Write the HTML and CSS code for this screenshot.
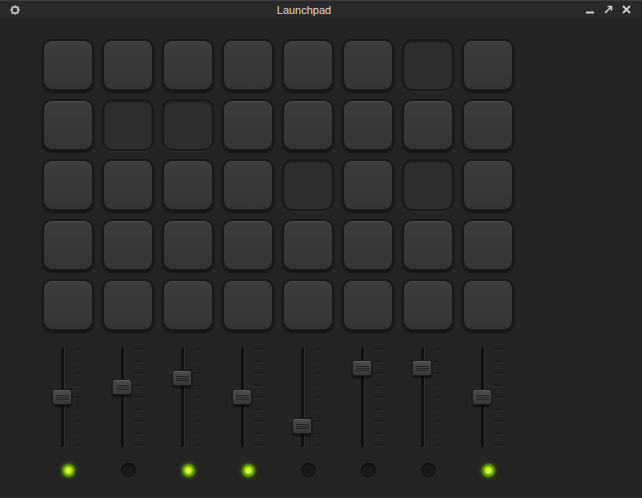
FILE: index.html
```html
<!DOCTYPE html>
<html lang="en">
  <head>
    <meta charset="UTF-8" />
    <title>Launchpad</title>
    <link rel="stylesheet" href="styles.css">
  </head>
  <body>
    <div class="window">
      <header class="titlebar">
        <svg class="gear" width="10" height="10" viewBox="0 0 10 10">
          <circle cx="5" cy="5" r="3.2" fill="none" stroke="#bdbdbd" stroke-width="1.8" />
          <path d="M5 0.2v2M5 7.8v2M0.2 5h2M7.8 5h2M1.6 1.6l1.4 1.4M7 7l1.4 1.4M1.6 8.4L3 7M7 3l1.4-1.4" stroke="#bdbdbd" stroke-width="1.4" />
        </svg>
        <span class="title">Launchpad</span>
        <div class="controls">
          <svg width="9" height="9" viewBox="0 0 9 9"><path d="M0 7.5h8" stroke="#cfcfcf" stroke-width="2" /></svg>
          <svg width="9" height="9" viewBox="0 0 9 9"><path d="M1 8L7 2M3.5 1.5h4v4" fill="none" stroke="#cfcfcf" stroke-width="1.6" /></svg>
          <svg width="9" height="9" viewBox="0 0 9 9"><path d="M1 1l7 7M8 1l-7 7" stroke="#cfcfcf" stroke-width="1.8" /></svg>
        </div>
      </header>

      <main class="panel">
        <div class="pads">
          <div class="pad"></div><div class="pad"></div><div class="pad"></div><div class="pad"></div>
          <div class="pad"></div><div class="pad"></div><div class="pad pressed"></div><div class="pad"></div>

          <div class="pad"></div><div class="pad pressed"></div><div class="pad pressed"></div><div class="pad"></div>
          <div class="pad"></div><div class="pad"></div><div class="pad"></div><div class="pad"></div>

          <div class="pad"></div><div class="pad"></div><div class="pad"></div><div class="pad"></div>
          <div class="pad pressed"></div><div class="pad"></div><div class="pad pressed"></div><div class="pad"></div>

          <div class="pad"></div><div class="pad"></div><div class="pad"></div><div class="pad"></div>
          <div class="pad"></div><div class="pad"></div><div class="pad"></div><div class="pad"></div>

          <div class="pad"></div><div class="pad"></div><div class="pad"></div><div class="pad"></div>
          <div class="pad"></div><div class="pad"></div><div class="pad"></div><div class="pad"></div>
        </div>

        <div class="mixer">
          <div class="strip">
            <div class="fader"><div class="track"></div><div class="ticks"><i></i><i></i><i></i><i></i><i></i><i></i><i></i><i></i><i></i></div><div class="knob" style="top: 42px"></div></div>
            <div class="led on"></div>
          </div>
          <div class="strip">
            <div class="fader"><div class="track"></div><div class="ticks"><i></i><i></i><i></i><i></i><i></i><i></i><i></i><i></i><i></i></div><div class="knob" style="top: 32px"></div></div>
            <div class="led"></div>
          </div>
          <div class="strip">
            <div class="fader"><div class="track"></div><div class="ticks"><i></i><i></i><i></i><i></i><i></i><i></i><i></i><i></i><i></i></div><div class="knob" style="top: 23px"></div></div>
            <div class="led on"></div>
          </div>
          <div class="strip">
            <div class="fader"><div class="track"></div><div class="ticks"><i></i><i></i><i></i><i></i><i></i><i></i><i></i><i></i><i></i></div><div class="knob" style="top: 42px"></div></div>
            <div class="led on"></div>
          </div>
          <div class="strip">
            <div class="fader"><div class="track"></div><div class="ticks"><i></i><i></i><i></i><i></i><i></i><i></i><i></i><i></i><i></i></div><div class="knob" style="top: 71px"></div></div>
            <div class="led"></div>
          </div>
          <div class="strip">
            <div class="fader"><div class="track"></div><div class="ticks"><i></i><i></i><i></i><i></i><i></i><i></i><i></i><i></i><i></i></div><div class="knob" style="top: 13px"></div></div>
            <div class="led"></div>
          </div>
          <div class="strip">
            <div class="fader"><div class="track"></div><div class="ticks"><i></i><i></i><i></i><i></i><i></i><i></i><i></i><i></i><i></i></div><div class="knob" style="top: 13px"></div></div>
            <div class="led"></div>
          </div>
          <div class="strip">
            <div class="fader"><div class="track"></div><div class="ticks"><i></i><i></i><i></i><i></i><i></i><i></i><i></i><i></i><i></i></div><div class="knob" style="top: 42px"></div></div>
            <div class="led on"></div>
          </div>
        </div>
      </main>
    </div>
  </body>
</html>
```

FILE: styles.css
```css
html,
body {
  margin: 0;
  height: 100%;
  background-color: #242424;
  font-family: "Liberation Sans", Arial, sans-serif;
}

.window {
  height: 498px;
  box-sizing: border-box;
  background-color: #242424;
  border-bottom: 1px solid #2e2e2e;
}

.titlebar {
  height: 18px;
  box-sizing: border-box;
  display: flex;
  align-items: center;
  padding: 0 9px 0 9px;
  background-color: #2a2a2a;
  border-top: 1px solid #3c3c3c;
  color: #dcdcdc;
  font-size: 11px;
}

.gear {
  margin-left: 1px;
}

.title {
  flex: 1;
  text-align: center;
  margin-left: 2px;
}

.controls {
  display: flex;
  gap: 9px;
  margin-right: 2px;
}

.panel {
  padding: 21px 0 0 42px;
}

.pads {
  display: grid;
  grid-template-columns: repeat(8, 52px);
  grid-auto-rows: 52px;
  gap: 8px;
}

.pad {
  box-sizing: border-box;
  border: 2px solid #191919;
  border-radius: 10px;
  background: linear-gradient(#3c3c3c, #353535);
  box-shadow: inset 0 1px 0 rgba(255, 255, 255, 0.07), 0 2px 2px rgba(0, 0, 0, 0.45);
}

.pad.pressed {
  background: #2e2e2e;
  border-color: #1b1b1b;
  box-shadow: inset 0 1px 2px rgba(0, 0, 0, 0.45), 0 1px 0 rgba(255, 255, 255, 0.04);
}

.mixer {
  display: flex;
  gap: 8px;
  margin-top: 16px;
}

.strip {
  width: 52px;
}

.fader {
  position: relative;
  height: 100px;
  display: flex;
  padding-left: 19px;
}

.track {
  width: 3px;
  height: 100px;
  border-radius: 2px;
  background-color: #101010;
  box-shadow: 1px 0 0 rgba(255, 255, 255, 0.05);
}

.ticks {
  display: flex;
  flex-direction: column;
  gap: 11px;
  padding-top: 2px;
  margin-left: 10px;
}

.ticks i {
  display: block;
  width: 6px;
  height: 1px;
  background-color: #161616;
  box-shadow: 0 1px 0 #2f2f2f;
}

.knob {
  position: absolute;
  left: 10px;
  width: 20px;
  height: 16px;
  box-sizing: border-box;
  border-radius: 3px;
  border: 1px solid #1c1c1c;
  background:
    linear-gradient(#262626, #262626) center 5px / 13px 1px no-repeat,
    linear-gradient(#262626, #262626) center 7px / 13px 1px no-repeat,
    linear-gradient(#262626, #262626) center 9px / 13px 1px no-repeat,
    linear-gradient(#4a4a4a, #393939);
  box-shadow: inset 0 1px 0 rgba(255, 255, 255, 0.1), 0 2px 2px rgba(0, 0, 0, 0.5);
}

.led {
  width: 15px;
  height: 15px;
  margin: 16px 0 0 19px;
  border-radius: 50%;
  background-color: #1a1a1a;
  box-shadow: inset 0 1px 2px rgba(0, 0, 0, 0.7), 0 1px 0 rgba(255, 255, 255, 0.04);
}

.led.on {
  background: radial-gradient(circle, #f2ff7a 0, #c6f410 25%, #6aa800 45%, #2f5a0a 70%, #1c300c 100%);
  box-shadow: 0 0 4px rgba(110, 190, 0, 0.35);
}
```
